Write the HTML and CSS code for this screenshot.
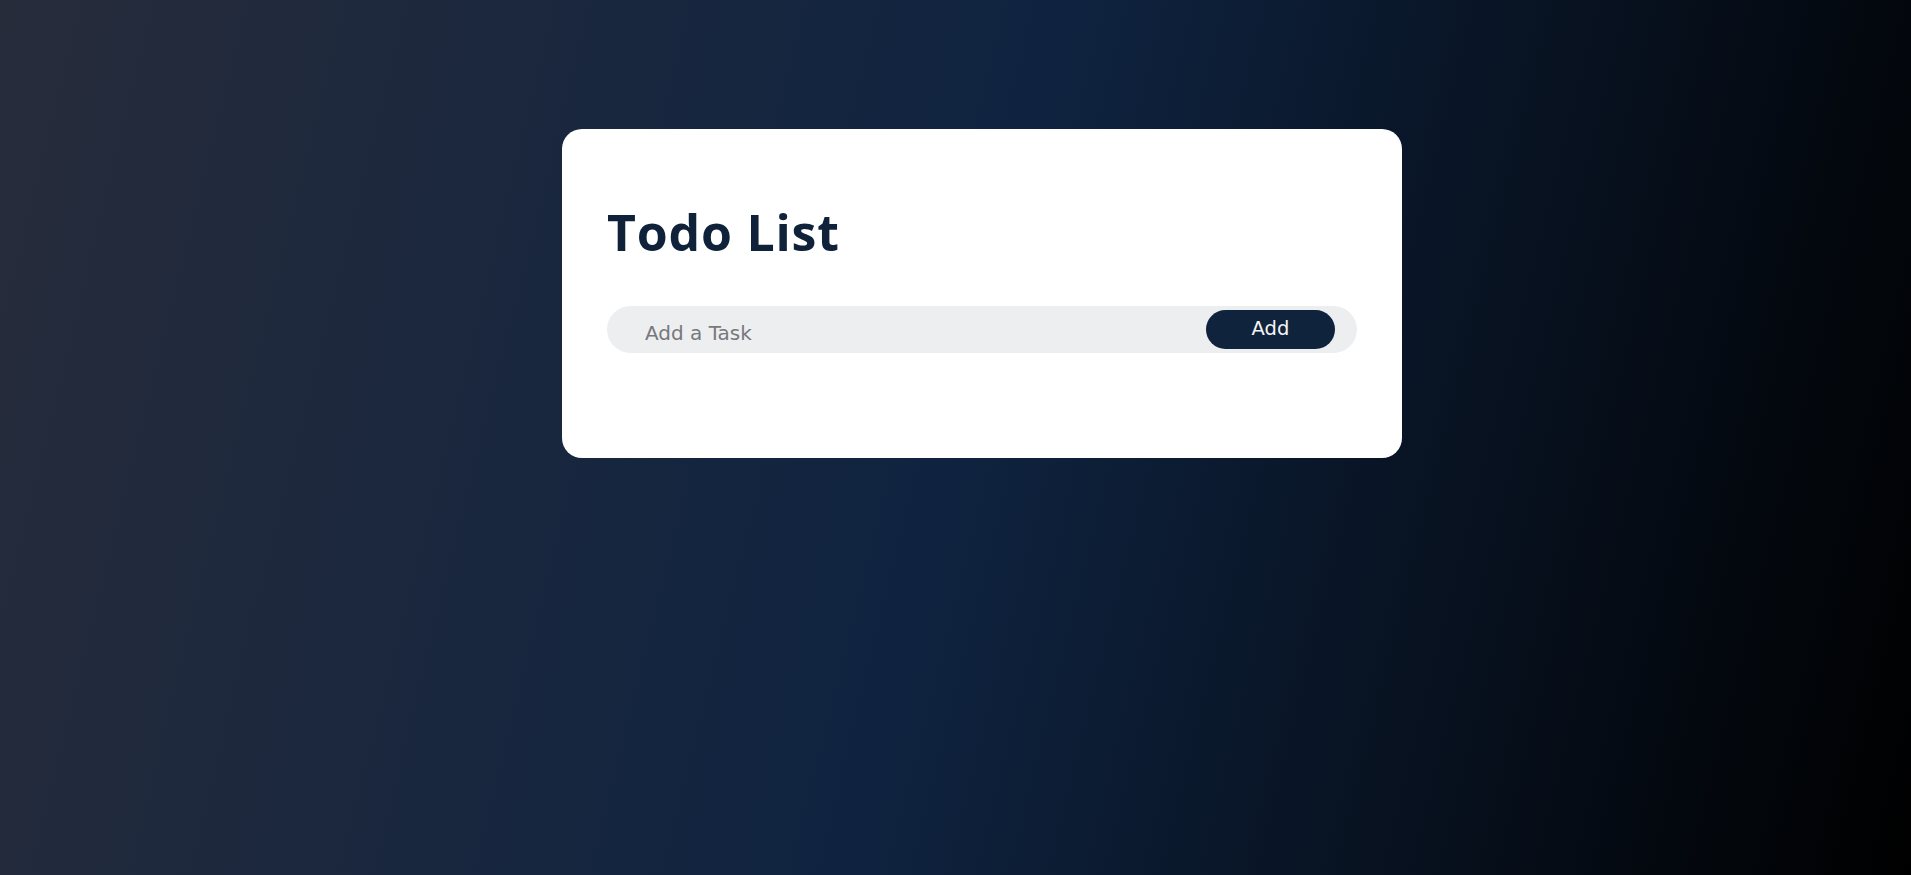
FILE: index.html
```html
<!DOCTYPE html>
<html lang="en">
<head>
<meta charset="utf-8">
<title>Todo List</title>
<link rel="stylesheet" href="styles.css">
</head>
<body>
  <div class="todo-app">
    <h2 class="title">Todo List</h2>
    <div class="row">
      <input class="task-input" type="text" placeholder="Add a Task">
      <button class="add-btn">Add</button>
    </div>
  </div>
</body>
</html>
```
FILE: styles.css
```css
* {
  box-sizing: border-box;
}
html, body {
  margin: 0;
  padding: 0;
}
body {
  min-height: 100vh;
  background: linear-gradient(104deg, #272c3b 0%, #0f2340 50%, #000000 100%);
  font-family: "DejaVu Sans", sans-serif;
  overflow: hidden;
}
.todo-app {
  width: 840px;
  margin: 129px 0 0 562px;
  padding: 73px 45px 105px 45px;
  background: #ffffff;
  border-radius: 20px;
}
.title {
  margin: 0 0 44px 0;
  font-family: "Open Sans", sans-serif;
  font-weight: 700;
  font-size: 50px;
  line-height: 60px;
  letter-spacing: 0.8px;
  color: #0f2239;
}
.row {
  display: flex;
  align-items: center;
  height: 47px;
  background: #edeef0;
  border-radius: 30px;
  padding-right: 22px;
}
.task-input {
  flex: 1;
  min-width: 0;
  height: 47px;
  border: none;
  outline: none;
  background: transparent;
  padding: 7px 0 0 38px;
  font-family: "DejaVu Sans", sans-serif;
  font-size: 20px;
  color: #333;
}
.task-input::placeholder {
  color: #77787c;
}
.add-btn {
  width: 129px;
  height: 39px;
  border: none;
  border-radius: 40px;
  background: #10233c;
  color: #f4f4f4;
  font-family: "DejaVu Sans", sans-serif;
  font-size: 19.5px;
  padding: 0 0 3px 0;
  cursor: pointer;
}
```
